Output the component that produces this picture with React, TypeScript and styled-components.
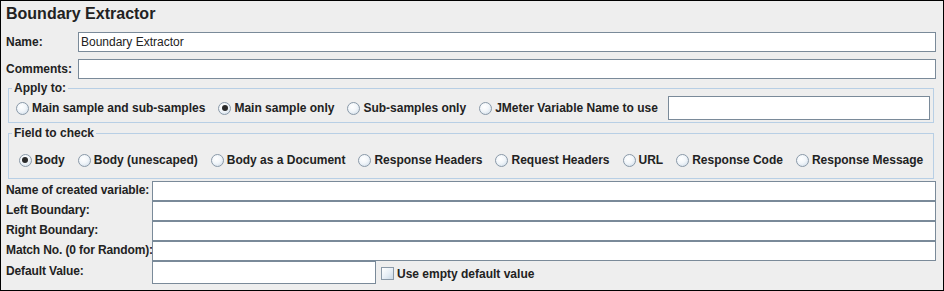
import React from "react";
import styled, { createGlobalStyle } from "styled-components";

const Global = createGlobalStyle`
  html, body { margin: 0; padding: 0; background: #eeeeee; }
  * { box-sizing: border-box; }
`;

const Panel = styled.div`
  width: 944px;
  height: 291px;
  border: 1px solid #000;
  background: #eeeeee;
  padding: 0 7px 0 5px;
  font-family: "Liberation Sans", Arial, sans-serif;
  font-size: 12px;
  color: #222;
  display: flex;
  flex-direction: column;
`;

const Title = styled.h1`
  margin: 3px 0 0 0;
  font-size: 16px;
  line-height: 20px;
  font-weight: bold;
  color: #222;
`;

const TopRow = styled.div<{ $mt: number }>`
  display: flex;
  align-items: center;
  margin-top: ${(p) => p.$mt}px;
`;

const Label = styled.label`
  font-weight: bold;
  white-space: nowrap;
`;

const TopLabel = styled(Label)`
  width: 72px;
  flex: none;
`;

const FormLabel = styled(Label)`
  letter-spacing: -0.12px;
  padding-bottom: 3px;
`;

const TextField = styled.div<{ $h?: number; $w?: number }>`
  height: ${(p) => p.$h ?? 20}px;
  ${(p) => (p.$w ? `width: ${p.$w}px; flex: none;` : "flex: 1;")}
  background: #fff;
  border: 1px solid #7a8a99;
  padding: 0 2px;
  display: flex;
  align-items: center;
  font-size: 12px;
  white-space: nowrap;
  overflow: hidden;
`;

const Group = styled.fieldset<{ $mt: number }>`
  margin: ${(p) => p.$mt}px 2px 0 2px;
  padding: 0;
  border: 1px solid #b8cfe5;
  min-width: 0;
`;

const Legend = styled.legend`
  margin-left: 3px;
  padding: 0 2px;
  font-weight: bold;
  line-height: 14px;
  font-size: 12px;
`;

const RadioRow = styled.div<{ $center?: boolean; $pt: number; $pb: number; $pl: number; $pr: number; $h: number }>`
  display: flex;
  align-items: center;
  justify-content: ${(p) => (p.$center ? "center" : "flex-start")};
  gap: 13px;
  padding: ${(p) => `${p.$pt}px ${p.$pr}px ${p.$pb}px ${p.$pl}px`};
  height: ${(p) => p.$h + p.$pt + p.$pb}px;
`;

const Option = styled.span`
  display: inline-flex;
  align-items: center;
  font-weight: bold;
  white-space: nowrap;
`;

const RadioDot = styled.span<{ $on?: boolean }>`
  width: 13px;
  height: 13px;
  border-radius: 50%;
  border: 1px solid #8a99a8;
  background: radial-gradient(circle at 40% 35%, #ffffff 0%, #f2f6fa 45%, #c9d8e6 100%);
  margin-right: 3px;
  flex: none;
  display: inline-flex;
  align-items: center;
  justify-content: center;
  &::after {
    content: "";
    display: ${(p) => (p.$on ? "block" : "none")};
    width: 6px;
    height: 6px;
    border-radius: 50%;
    background: #2a2a2a;
  }
`;

const Box = styled.span`
  width: 13px;
  height: 13px;
  border: 1px solid #8a99a8;
  background: linear-gradient(135deg, #ffffff 0%, #e6eef6 55%, #c9d8e6 100%);
  margin-right: 3px;
  flex: none;
`;

const VarField = styled(TextField)`
  margin-left: -3px;
`;

const Form = styled.div`
  display: grid;
  grid-template-columns: 146px 1fr;
  grid-template-rows: repeat(4, 20px) 23px;
  margin-top: 2px;
  align-items: center;
`;

const LastCell = styled.div`
  display: flex;
  align-items: center;
  height: 23px;
`;

const CheckOption = styled(Option)`
  margin-left: 5px;
  padding-top: 2px;
`;

const Radio = ({ label, on }: { label: string; on?: boolean }) => (
  <Option>
    <RadioDot $on={on} />
    {label}
  </Option>
);

export default function App() {
  return (
    <>
      <Global />
      <Panel>
        <Title>Boundary Extractor</Title>
        <TopRow $mt={8}>
          <TopLabel>Name:</TopLabel>
          <TextField>Boundary Extractor</TextField>
        </TopRow>
        <TopRow $mt={7}>
          <TopLabel>Comments:</TopLabel>
          <TextField />
        </TopRow>
        <Group $mt={2}>
          <Legend>Apply to:</Legend>
          <RadioRow $pt={1} $pb={2} $pl={7} $pr={3} $h={24}>
            <Radio label="Main sample and sub-samples" />
            <Radio label="Main sample only" on />
            <Radio label="Sub-samples only" />
            <Radio label="JMeter Variable Name to use" />
            <VarField $h={24} />
          </RadioRow>
        </Group>
        <Group $mt={3}>
          <Legend>Field to check</Legend>
          <RadioRow $center $pt={8} $pb={6} $pl={0} $pr={0} $h={24}>
            <Radio label="Body" on />
            <Radio label="Body (unescaped)" />
            <Radio label="Body as a Document" />
            <Radio label="Response Headers" />
            <Radio label="Request Headers" />
            <Radio label="URL" />
            <Radio label="Response Code" />
            <Radio label="Response Message" />
          </RadioRow>
        </Group>
        <Form>
          <FormLabel>Name of created variable:</FormLabel>
          <TextField />
          <FormLabel>Left Boundary:</FormLabel>
          <TextField />
          <FormLabel>Right Boundary:</FormLabel>
          <TextField />
          <FormLabel>Match No. (0 for Random):</FormLabel>
          <TextField />
          <FormLabel>Default Value:</FormLabel>
          <LastCell>
            <TextField $h={23} $w={224} />
            <CheckOption>
              <Box />
              Use empty default value
            </CheckOption>
          </LastCell>
        </Form>
      </Panel>
    </>
  );
}
